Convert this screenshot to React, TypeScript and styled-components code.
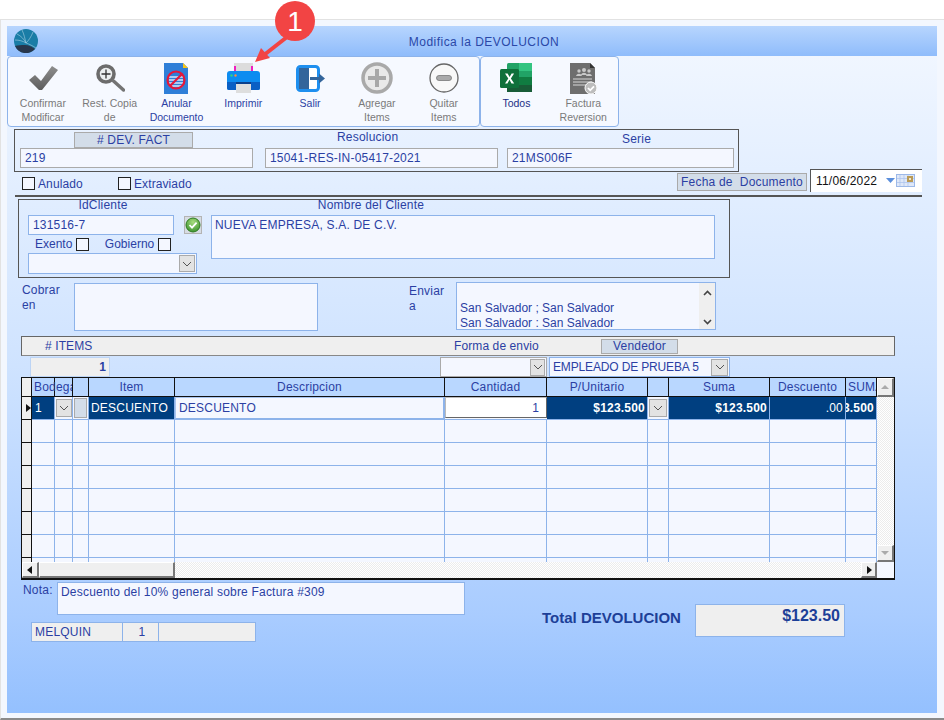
import React from 'react'
import styled, { createGlobalStyle } from 'styled-components'

const Global = createGlobalStyle`
  html, body { margin: 0; padding: 0; background: #fff; }
  body { font-family: "Liberation Sans", Arial, sans-serif; font-size: 12px; color: #2b3fa3; }
`

const Page = styled.div`
  position: relative;
  width: 944px;
  height: 720px;
  padding-top: 19px;
  box-sizing: border-box;
  overflow: hidden;
  background: #fff;
`
const Frame = styled.div`
  height: 701px;
  box-sizing: border-box;
  padding: 6px 7px 5px 6px;
  background: #f3f7fe;
  border-top: 1px solid #e2e2e2;
  border-left: 1px solid #e2e2e2;
  border-bottom: 2px solid #8a8a8a;
`
const Client = styled.div`
  height: 687px;
  display: flex;
  flex-direction: column;
  background: linear-gradient(180deg, #f0f6ff 30px, #cfe3ff 340px, #a9ccff 590px, #94c0fe 100%);
`
const TitleBar = styled.div`
  height: 30px;
  flex: none;
  display: flex;
  align-items: center;
  padding-left: 7px;
  background: linear-gradient(180deg, #b7d5fe, #8fbcfb);
`
const TitleText = styled.div`
  flex: 1;
  text-align: center;
  padding-top: 1px;
  padding-right: 7px;
  letter-spacing: 0.47px;
  color: #2a48a8;
`
const Toolbar = styled.div`
  display: flex;
  height: 71px;
  flex: none;
`
const Group = styled.div`
  display: flex;
  height: 71px;
  box-sizing: border-box;
  padding-left: ${p => p.$pad}px;
  width: ${p => p.$w}px;
  background: #f6f9ff;
  border: 1px solid #8db3ea;
  border-radius: 4px;
`
const ToolButton = styled.div`
  width: 66.8px;
  flex: none;
  display: flex;
  flex-direction: column;
  align-items: center;
`
const ToolIcon = styled.div`
  height: 40px;
  display: flex;
  align-items: center;
  justify-content: center;
  padding-top: 1px;
`
const ToolLabel = styled.div`
  font-size: 10.5px;
  line-height: 14px;
  text-align: center;
  white-space: pre;
  margin-top: -2px;
  color: ${p => (p.$off ? '#7a7a7a' : p.$strong ? '#1c2f85' : '#2b3fa3')};
`
const DocBox = styled.div`
  width: 725px;
  height: 43px;
  margin: 2px 0 0 7px;
  flex: none;
  box-sizing: border-box;
  border: 1px solid #555;
  display: grid;
  grid-template-columns: 245px 242px 227px;
  padding-left: 5px;
`
const DocCol = styled.div`
  display: flex;
  flex-direction: column;
  align-items: flex-start;
`
const Caption = styled.div`
  height: 18px;
  line-height: ${p => p.$lh}px;
  margin-left: ${p => p.$ml}px;
  letter-spacing: 0.2px;
  white-space: nowrap;
`
const Tag = styled.div`
  box-sizing: border-box;
  width: ${p => p.$w}px;
  height: ${p => p.$h || 16}px;
  line-height: ${p => (p.$h || 16) - 2}px;
  margin: ${p => p.$m || '2px 0 0 0'};
  text-align: center;
  background: #d3dde9;
  border: 1px solid #aaa;
  letter-spacing: 0.2px;
  white-space: pre;
`
const Field = styled.div`
  box-sizing: border-box;
  width: ${p => (p.$w ? `${p.$w}px` : '100%')};
  height: ${p => p.$h}px;
  padding: 2px ${p => p.$pad || 4}px;
  line-height: 15px;
  letter-spacing: 0.2px;
  flex: none;
  background: #f4f7ff;
  border: 1px solid ${p => (p.$gray ? '#aaa' : '#8db3ea')};
  white-space: nowrap;
  overflow: hidden;
`
const CheckRow = styled.div`
  height: 23px;
  flex: none;
  display: flex;
  align-items: center;
  padding-left: 15px;
`
const CheckItem = styled.label`
  display: flex;
  align-items: center;
  gap: 3px;
  width: ${p => p.$w}px;
  letter-spacing: 0.1px;
`
const Box = styled.span`
  display: block;
  width: 13px;
  height: 13px;
  flex: none;
  background: #f4f7ff;
  border: 1px solid #222;
  box-sizing: border-box;
`
const DateGroup = styled.div`
  margin-left: auto;
  display: flex;
  align-items: flex-start;
  gap: 3px;
  margin-top: -6px;
  margin-right: 15px;
`
const DateField = styled.div`
  box-sizing: border-box;
  width: 112px;
  height: 23px;
  display: flex;
  align-items: center;
  justify-content: space-between;
  padding: 0 7px 0 5px;
  background: #fff;
  color: #111;
  border-top: 1px solid #555;
  border-left: 1px solid #555;
  letter-spacing: 0.2px;
`
const Rule = styled.div`
  height: 2px;
  flex: none;
  margin: 0 15px 0 8px;
  background: #555;
`
const ClientBox = styled.div`
  width: 712px;
  height: 79px;
  flex: none;
  box-sizing: border-box;
  margin: 2px 0 0 11px;
  padding: 0 14px 0 9px;
  border: 1px solid #555;
  display: flex;
  gap: 9px;
`
const ClientLeft = styled.div`
  width: 174px;
  flex: none;
  display: flex;
  flex-direction: column;
`
const ClientRight = styled.div`
  flex: 1;
  display: flex;
  flex-direction: column;
`
const CenterCaption = styled.div`
  width: 150px;
  height: 15px;
  margin-left: ${p => p.$ml || 0}px;
  text-align: center;
  line-height: 10px;
  letter-spacing: 0.2px;
  white-space: nowrap;
`
const IdRow = styled.div`
  display: flex;
  align-items: center;
  gap: 10px;
`
const FlagRow = styled.div`
  display: flex;
  align-items: center;
  height: 18px;
  padding-left: 7px;
`
const Flag = styled.div`
  display: flex;
  align-items: center;
  gap: 3.5px;
  margin-right: ${p => p.$mr || 0}px;
`
const Select = styled.div`
  box-sizing: border-box;
  flex: none;
  width: ${p => p.$w}px;
  height: ${p => p.$h || 21}px;
  margin-left: ${p => p.$ml || 0}px;
  margin-top: ${p => p.$mt || 0}px;
  display: flex;
  align-items: center;
  justify-content: space-between;
  padding: 0 1px 0 3px;
  letter-spacing: ${p => (p.$tight ? '-0.15px' : '0.2px')};
  background: #f4f7ff;
  border: 1px solid ${p => (p.$gray ? '#aaa' : '#8db3ea')};
  white-space: nowrap;
`
const Drop = styled.span`
  width: ${p => p.$w || 16}px;
  height: ${p => p.$h || 17}px;
  flex: none;
  box-sizing: border-box;
  background: #e3e3e3;
  border: 1px solid #aaa;
  display: flex;
  align-items: center;
  justify-content: center;
`
const BillRow = styled.div`
  height: 49px;
  flex: none;
  margin-top: 4px;
  display: flex;
  padding-left: 15px;
`
const BillLabel = styled.div`
  width: ${p => p.$w}px;
  flex: none;
  margin-left: ${p => p.$ml || 0}px;
  line-height: 15px;
  padding-top: ${p => p.$top}px;
  letter-spacing: 0.2px;
`
const BillBox = styled(Field)`
  margin-top: 1px;
  padding: 0;
`
const AddressBox = styled.div`
  box-sizing: border-box;
  width: 260px;
  height: 48px;
  flex: none;
  display: flex;
  background: #f4f7ff;
  border: 1px solid #8db3ea;
`
const AddressText = styled.div`
  flex: 1;
  padding: 17.5px 0 0 3px;
  line-height: 15px;
`
const AddressScroll = styled.div`
  width: 16px;
  background: #efefef;
  display: flex;
  flex-direction: column;
  justify-content: space-between;
  align-items: center;
  padding: 7px 0 4px;
`
const ItemsBar = styled.div`
  width: 874px;
  height: 20px;
  margin: 5px 0 0 14px;
  flex: none;
  box-sizing: border-box;
  background: #efefef;
  border: 1px solid #666;
  border-bottom-color: #888;
  display: flex;
  align-items: center;
  letter-spacing: 0.1px;
`
const BarText = styled.div`
  margin-left: ${p => p.$ml}px;
  width: ${p => p.$w}px;
  flex: none;
  white-space: nowrap;
`
const FilterRow = styled.div`
  height: 21px;
  flex: none;
  display: flex;
  align-items: flex-start;
  padding-left: 23px;
`
const CountBox = styled.div`
  box-sizing: border-box;
  width: 80px;
  height: 20px;
  line-height: 18px;
  padding-right: 3px;
  margin-top: 1px;
  margin-right: 330px;
  text-align: right;
  font-weight: 700;
  background: #efefef;
  border: 1px solid #bcd4f5;
`
const Table = styled.div`
  width: 874px;
  height: 203px;
  flex: none;
  box-sizing: border-box;
  margin-left: 14px;
  border: 1px solid #111;
  border-bottom-width: 2px;
  display: grid;
  grid-template-columns: 1fr 17px;
  grid-template-rows: 184px 16px;
  background: #f4f7ff;
`
const TableBody = styled.div`
  overflow: hidden;
`
const columns = '10px 23px 18px 16px 86px 270px 102px 101px 21px 101px 76px 31px'
const HeadRow = styled.div`
  display: grid;
  grid-template-columns: ${columns};
  height: 18px;
  background: #b9d7ff;
  border-bottom: 1px solid #111;
`
const HeadCell = styled.div`
  box-sizing: border-box;
  line-height: 18px;
  padding-left: ${p => (p.$left ? 2 : 0)}px;
  text-align: ${p => (p.$left ? 'left' : 'center')};
  letter-spacing: 0.2px;
  white-space: nowrap;
  overflow: ${p => (p.$spill ? 'visible' : 'hidden')};
  border-right: 1px solid #111;
  background: ${p => (p.$corner ? '#efefef' : p.$clear ? 'transparent' : '#b9d7ff')};
`
const BodyRow = styled.div`
  display: grid;
  grid-template-columns: ${columns};
  height: 23px;
  box-sizing: border-box;
  border-bottom: 1px solid #8db3ea;
`
const Cell = styled.div`
  box-sizing: border-box;
  display: flex;
  align-items: center;
  justify-content: ${p => (p.$right ? 'flex-end' : 'flex-start')};
  padding: 0 ${p => (p.$right ? 2 : 0)}px 0 ${p => (p.$right ? 0 : p.$pl || 2)}px;
  overflow: hidden;
  white-space: nowrap;
  letter-spacing: 0.2px;
  border-right: 1px solid #8db3ea;
  font-weight: ${p => (p.$bold ? 700 : 400)};
  color: ${p => (p.$sel ? '#fff' : 'inherit')};
  background: ${p => (p.$sel ? '#003f80' : 'transparent')};
`
const RowHead = styled.div`
  box-sizing: border-box;
  background: #efefef;
  border-right: 1px solid #111;
  border-bottom: 1px solid #111;
  margin-bottom: -1px;
  display: flex;
  align-items: center;
  justify-content: flex-end;
`
const NameCell = styled.div`
  box-sizing: border-box;
  display: flex;
  align-items: center;
  padding-left: 3px;
  letter-spacing: 0.2px;
  background: #f4f7ff;
  border-left: 1px solid #a9c5ef;
  border-top: 1px solid #a9c5ef;
  border-right: 2px solid #8db3ea;
  border-bottom: 1px solid #8db3ea;
`
const QtyCell = styled.div`
  box-sizing: border-box;
  display: flex;
  align-items: center;
  justify-content: flex-end;
  padding-right: 7px;
  margin-bottom: 1px;
  background: #fff;
  border: 1px solid #bbb;
  border-right-color: #666;
  border-bottom-color: #666;
`
const MiniCell = styled.div`
  box-sizing: border-box;
  display: flex;
  align-items: center;
  justify-content: center;
  padding: 1px;
  background: #f4f7ff;
  border-right: 1px solid #8db3ea;
`
const BlankKey = styled.div`
  width: 13px;
  height: 20px;
  box-sizing: border-box;
  background: #d3dde9;
  border: 1px solid #aaa;
`
const Track = styled.div`
  display: flex;
  flex-direction: ${p => (p.$v ? 'column' : 'row')};
  justify-content: space-between;
  background: repeating-conic-gradient(#ececec 0 25%, #fff 0 50%) 0 0 / 2px 2px;
`
const ScrollKey = styled.div`
  box-sizing: border-box;
  width: ${p => p.$w || 17}px;
  height: ${p => p.$h || 16}px;
  flex: none;
  display: flex;
  align-items: center;
  justify-content: center;
  background: #efefef;
  border-top: 1px solid #fff;
  border-left: 1px solid #fff;
  border-right: 2px solid #777;
  border-bottom: 2px solid #777;
`
const Thumb = styled(ScrollKey)`
  margin-right: auto;
`
const ScrollCorner = styled.div`
  background: #f4f7ff;
`
const Bottom = styled.div`
  display: grid;
  grid-template-columns: 34px 408px 77px 153px 150px;
  grid-template-rows: 33px;
  padding-left: 16px;
  margin-top: 2px;
  flex: none;
`
const NoteLabel = styled.div`
  padding-top: 1px;
  letter-spacing: 0.2px;
`
const TotalLabel = styled.div`
  grid-column: 4;
  margin-top: 28px;
  height: 16px;
  line-height: 16px;
  font-size: 15px;
  font-weight: 700;
  white-space: nowrap;
  color: #1d3f98;
`
const TotalBox = styled.div`
  box-sizing: border-box;
  height: 33px;
  margin-top: 22px;
  padding: 2px 4px 0 0;
  text-align: right;
  font-size: 16px;
  line-height: 18px;
  font-weight: 700;
  background: #efefef;
  border: 1px solid #8db3ea;
  color: #1d3f98;
`
const StatusRow = styled.div`
  display: flex;
  margin: 7px 0 0 24px;
  flex: none;
`
const StatusCell = styled.div`
  box-sizing: border-box;
  width: ${p => p.$w}px;
  height: 20px;
  line-height: 18px;
  padding-left: 3px;
  text-align: ${p => (p.$center ? 'center' : 'left')};
  background: #efefef;
  border: 1px solid #8db3ea;
  margin-right: -1px;
  letter-spacing: 0.2px;
`
const Callout = styled.svg`
  position: absolute;
  left: 240px;
  top: 0;
`
const CalloutNumber = styled.text`
  font-family: "Liberation Sans", Arial, sans-serif;
  font-size: 28px;
  fill: #fff;
`

const Chevron = () => (
  <svg width="10" height="6" viewBox="0 0 10 6"><path d="M1 1l4 4 4-4" fill="none" stroke="#555" strokeWidth="1" /></svg>
)
const Tri = ({ d, c = '#111' }: { d: string; c?: string }) => (
  <svg width="8" height="8" viewBox="0 0 8 8"><path d={d} fill={c} /></svg>
)

const Logo = () => (
  <svg width="24" height="24" viewBox="0 0 24 24">
    <circle cx="12" cy="12" r="12" fill="#1a7da6" />
    <path d="M1 17a12 12 0 0 0 20 3c-3-2-6-4-10-4-4 0-7 0-10 1z" fill="#28374c" />
    <path d="M3 5c4 2 7 5 9 9 3-3 5-6 7-11M1 11c4 0 8 1 11 3M12 14c-1-4-2-9-4-13M12 14c3 1 7 3 10 5" fill="none" stroke="#a9d2e4" strokeWidth=".6" />
  </svg>
)
const CheckIcon = () => (
  <svg width="30" height="26" viewBox="0 0 30 26">
    <defs><linearGradient id="ck" x1="0" y1="0" x2="0" y2="1"><stop offset="0" stopColor="#8e8e8e" /><stop offset="1" stopColor="#5d5d5d" /></linearGradient></defs>
    <path d="M1 15l6-5 6 6L24 1l6 4-16 20h-3z" fill="url(#ck)" />
  </svg>
)
const LensIcon = () => (
  <svg width="30" height="30" viewBox="0 0 30 30">
    <circle cx="11" cy="11" r="8" fill="#eceff0" stroke="#6c6c6c" strokeWidth="3.6" />
    <path d="M11 6.500v9M6.500 11h9" stroke="#333" strokeWidth="1.300" />
    <path d="M18.500 18l10 9" stroke="#747474" strokeWidth="3.400" strokeLinecap="round" />
  </svg>
)
const VoidIcon = () => (
  <svg width="24" height="31" viewBox="0 0 24 31">
    <path d="M0 0h19l5 5v26H0z" fill="#2f7fd8" />
    <path d="M19 0l5 5h-5z" fill="#f5c518" />
    <path d="M5 14h14M5 17h14M5 20h14M5 23h14" stroke="#d8e8fa" strokeWidth="1.600" />
    <circle cx="12" cy="17" r="8.500" fill="none" stroke="#e5173a" strokeWidth="2.200" />
    <path d="M6 23l12-12" stroke="#e5173a" strokeWidth="2.200" />
  </svg>
)
const PrinterIcon = () => (
  <svg width="33" height="30" viewBox="0 0 33 30">
    <rect x="7" y="0" width="19" height="9" fill="#dcdcdc" />
    <rect x="7" y="3" width="2" height="6" fill="#f01fc0" />
    <rect x="24" y="3" width="2" height="6" fill="#f01fc0" />
    <path d="M3 8h27a3 3 0 0 1 3 3v14a2 2 0 0 1-2 2H2a2 2 0 0 1-2-2V11a3 3 0 0 1 3-3z" fill="#0d8cf0" />
    <path d="M0 19h33v6a2 2 0 0 1-2 2H2a2 2 0 0 1-2-2z" fill="#0a5fc4" />
    <rect x="9" y="21" width="15" height="9" fill="#dedede" />
    <rect x="9" y="19" width="15" height="2" fill="#0b3f8a" />
    <circle cx="4.500" cy="12.500" r="1.200" fill="#35d07f" />
    <circle cx="8.500" cy="12.500" r="1.200" fill="#ff8a3c" />
  </svg>
)
const ExitIcon = () => (
  <svg width="29" height="27" viewBox="0 0 29 27">
    <rect x="1.500" y="1.500" width="21" height="24" rx="3" fill="#fff" stroke="#1e8fef" strokeWidth="3" />
    <path d="M3 3h10v21H3z" fill="#33659b" />
    <path d="M14 13.500h11" stroke="#33659b" strokeWidth="3" />
    <path d="M23 8.500l6 5-6 5z" fill="#33659b" />
  </svg>
)
const PlusIcon = () => (
  <svg width="32" height="32" viewBox="0 0 32 32">
    <circle cx="16" cy="16" r="14" fill="#e9e9e9" stroke="#a9a9a9" strokeWidth="3.500" />
    <path d="M16 7v18M7 16h18" stroke="#a8a8a8" strokeWidth="4" />
  </svg>
)
const MinusIcon = () => (
  <svg width="30" height="30" viewBox="0 0 30 30">
    <circle cx="15" cy="15" r="14" fill="#f8f8f8" stroke="#666" strokeWidth="1.300" />
    <rect x="7.500" y="12.500" width="15" height="5" rx="2.500" fill="#aaa" stroke="#777" strokeWidth=".8" />
  </svg>
)
const ExcelIcon = () => (
  <svg width="32" height="30" viewBox="0 0 32 30">
    <rect x="7" y="0" width="25" height="29" rx="1.500" fill="#21a366" />
    <rect x="19" y="0" width="13" height="8" fill="#33c481" />
    <rect x="7" y="7" width="12" height="15" fill="#107c41" />
    <rect x="19" y="14" width="13" height="8" fill="#107c41" />
    <rect x="19" y="22" width="13" height="7" fill="#185c37" />
    <rect x="7" y="22" width="12" height="7" fill="#185c37" />
    <rect x="0" y="6" width="19" height="19" rx="1.500" fill="#0f703b" />
    <path d="M5 10.500h2.600l2 3.600 2-3.600h2.500l-3.200 5 3.300 5h-2.700l-2-3.700-2.100 3.700H5l3.300-5z" fill="#fff" />
  </svg>
)
const ReversalIcon = () => (
  <svg width="27" height="31" viewBox="0 0 27 31">
    <path d="M0 0h20l5 5v26H0z" fill="#6e6e6e" />
    <path d="M20 0l5 5h-5z" fill="#333" />
    <circle cx="9" cy="8" r="1.700" fill="#c9c9c9" />
    <circle cx="14" cy="7" r="2" fill="#c9c9c9" />
    <circle cx="19" cy="8" r="1.700" fill="#c9c9c9" />
    <path d="M6 13c1-3 5-3 6 0zM11 12c1-3 5-3 6 0zM16 13c1-3 5-3 6 0z" fill="#c9c9c9" />
    <path d="M3 16h19M3 19h19M3 22h14" stroke="#d6d6d6" strokeWidth="1.200" />
    <circle cx="21" cy="25" r="6" fill="#bdbdbd" stroke="#fff" />
    <path d="M18 25l2.200 2.300 3.800-4" fill="none" stroke="#fff" strokeWidth="1.800" />
  </svg>
)
const GreenKey = () => (
  <svg width="18" height="18" viewBox="0 0 18 18">
    <defs>
      <radialGradient id="gk" cx=".5" cy=".3" r=".8"><stop offset="0" stopColor="#a7dc7e" /><stop offset="1" stopColor="#2f8a25" /></radialGradient>
    </defs>
    <rect x=".5" y=".5" width="17" height="17" fill="#d6dce4" stroke="#b4b4b4" />
    <circle cx="9" cy="9" r="7" fill="url(#gk)" stroke="#2f7b20" />
    <path d="M5.500 9l2.500 2.600 4.600-5" fill="none" stroke="#fff" strokeWidth="1.800" />
  </svg>
)
const CalendarIcon = () => (
  <svg width="29" height="14" viewBox="0 0 29 14">
    <path d="M0 4h9L4.500 9z" fill="#5b8fdc" />
    <rect x="10.500" y=".5" width="18" height="12" fill="#dfe8f8" stroke="#9db9e8" />
    <path d="M14 1v11M18 1v11M22 1v11M11 4.500h17M11 8.500h17" stroke="#a9c2ec" strokeWidth=".7" />
    <rect x="21" y="2" width="6" height="6" fill="#b99a55" />
    <rect x="23" y="4" width="2" height="2" fill="#efe6cf" />
  </svg>
)

const tools = [
  { icon: <CheckIcon />, label: 'Confirmar\nModificar', off: true },
  { icon: <LensIcon />, label: 'Rest. Copia\nde', off: true },
  { icon: <VoidIcon />, label: 'Anular\nDocumento' },
  { icon: <PrinterIcon />, label: 'Imprimir' },
  { icon: <ExitIcon />, label: 'Salir' },
  { icon: <PlusIcon />, label: 'Agregar\nItems', off: true },
  { icon: <MinusIcon />, label: 'Quitar\nItems', off: true },
]

const emptyRows = [0, 1, 2, 3, 4, 5, 6]

const EmptyRow = () => (
  <BodyRow>
    <RowHead />
    {Array.from({ length: 11 }).map((_, i) => <Cell key={i} />)}
  </BodyRow>
)

const App = () => {
  return (
    <Page>
      <Global />
      <Frame>
        <Client>
          <TitleBar>
            <Logo />
            <TitleText>Modifica la DEVOLUCION</TitleText>
          </TitleBar>
          <Toolbar>
            <Group $w={473} $pad={1.5}>
              {tools.map(t => (
                <ToolButton key={t.label}>
                  <ToolIcon>{t.icon}</ToolIcon>
                  <ToolLabel $off={t.off}>{t.label}</ToolLabel>
                </ToolButton>
              ))}
            </Group>
            <Group $w={139} $pad={2}>
              <ToolButton>
                <ToolIcon><ExcelIcon /></ToolIcon>
                <ToolLabel $strong>Todos</ToolLabel>
              </ToolButton>
              <ToolButton>
                <ToolIcon><ReversalIcon /></ToolIcon>
                <ToolLabel $off>{'Factura\nReversion'}</ToolLabel>
              </ToolButton>
            </Group>
          </Toolbar>

          <DocBox>
            <DocCol>
              <Tag $w={119} $m="2px 0 0 54px"># DEV. FACT</Tag>
              <Field $w={233} $h={20} $gray>219</Field>
            </DocCol>
            <DocCol>
              <Caption $lh={14} $ml={72}>Resolucion</Caption>
              <Field $w={233} $h={20} $gray>15041-RES-IN-05417-2021</Field>
            </DocCol>
            <DocCol>
              <Caption $lh={18} $ml={115}>Serie</Caption>
              <Field $h={20} $gray>21MS006F</Field>
            </DocCol>
          </DocBox>

          <CheckRow>
            <CheckItem $w={96}><Box />Anulado</CheckItem>
            <CheckItem $w={96}><Box />Extraviado</CheckItem>
            <DateGroup>
              <Tag $w={130} $h={18} $m="4px 0 0 0">{'Fecha de  Documento'}</Tag>
              <DateField>11/06/2022<CalendarIcon /></DateField>
            </DateGroup>
          </CheckRow>
          <Rule />

          <ClientBox>
            <ClientLeft>
              <CenterCaption>IdCliente</CenterCaption>
              <IdRow>
                <Field $w={146} $h={20}>131516-7</Field>
                <GreenKey />
              </IdRow>
              <FlagRow>
                <Flag $mr={16}>Exento<Box /></Flag>
                <Flag>Gobierno<Box /></Flag>
              </FlagRow>
              <Select $w={169} $h={21}>
                <span />
                <Drop><Chevron /></Drop>
              </Select>
            </ClientLeft>
            <ClientRight>
              <CenterCaption $ml={85}>Nombre del Cliente</CenterCaption>
              <Field $h={44} $pad={3}>NUEVA EMPRESA, S.A. DE C.V.</Field>
            </ClientRight>
          </ClientBox>

          <BillRow>
            <BillLabel $w={52} $top={1}>Cobrar<br />en</BillLabel>
            <BillBox $w={244} $h={48} />
            <BillLabel $w={47} $top={2} $ml={91}>Enviar<br />a</BillLabel>
            <AddressBox>
              <AddressText>San Salvador ; San Salvador<br />San Salvador : San Salvador</AddressText>
              <AddressScroll>
                <svg width="9" height="6" viewBox="0 0 9 6"><path d="M1 5l3.500-3.500L8 5" fill="none" stroke="#444" strokeWidth="1.600" /></svg>
                <svg width="9" height="6" viewBox="0 0 9 6"><path d="M1 1l3.500 3.500L8 1" fill="none" stroke="#444" strokeWidth="1.600" /></svg>
              </AddressScroll>
            </AddressBox>
          </BillRow>

          <ItemsBar>
            <BarText $ml={23} $w={385}># ITEMS</BarText>
            <BarText $ml={24} $w={147}>Forma de envio</BarText>
            <Tag $w={77} $h={15} $m="0">Vendedor</Tag>
          </ItemsBar>
          <FilterRow>
            <CountBox>1</CountBox>
            <Select $w={107} $h={20} $mt={1} $gray>
              <span />
              <Drop $h={17} $w={15}><Chevron /></Drop>
            </Select>
            <Select $w={181} $h={20} $mt={1} $ml={2} $tight>
              EMPLEADO DE PRUEBA 5
              <Drop $h={17} $w={17}><Chevron /></Drop>
            </Select>
          </FilterRow>

          <Table>
            <TableBody>
              <HeadRow>
                <HeadCell $corner />
                <HeadCell $left $spill $clear>Bodega</HeadCell>
                <HeadCell $clear />
                <HeadCell />
                <HeadCell>Item</HeadCell>
                <HeadCell>Descripcion</HeadCell>
                <HeadCell>Cantidad</HeadCell>
                <HeadCell>P/Unitario</HeadCell>
                <HeadCell />
                <HeadCell>Suma</HeadCell>
                <HeadCell>Descuento</HeadCell>
                <HeadCell $left>SUMA</HeadCell>
              </HeadRow>
              <BodyRow>
                <RowHead><Tri d="M3 0l5 4-5 4z" /></RowHead>
                <Cell $sel $pl={3}>1</Cell>
                <MiniCell><Drop $w={16} $h={18}><Chevron /></Drop></MiniCell>
                <MiniCell><BlankKey /></MiniCell>
                <Cell $sel>DESCUENTO</Cell>
                <NameCell>DESCUENTO</NameCell>
                <QtyCell>1</QtyCell>
                <Cell $sel $right $bold>$123.500</Cell>
                <MiniCell><Drop $w={18} $h={18}><Chevron /></Drop></MiniCell>
                <Cell $sel $right $bold>$123.500</Cell>
                <Cell $sel $right>.00</Cell>
                <Cell $sel $right $bold>$123.500</Cell>
              </BodyRow>
              {emptyRows.map(i => <EmptyRow key={i} />)}
            </TableBody>
            <Track $v>
              <ScrollKey $h={19}><Tri d="M4 2l4 4H0z" c="#aaa" /></ScrollKey>
              <ScrollKey $h={17}><Tri d="M0 2h8L4 6z" c="#aaa" /></ScrollKey>
            </Track>
            <Track>
              <ScrollKey><Tri d="M6 0v8L1 4z" /></ScrollKey>
              <Thumb $w={136} />
              <ScrollKey $w={16}><Tri d="M2 0l5 4-5 4z" /></ScrollKey>
            </Track>
            <ScrollCorner />
          </Table>

          <Bottom>
            <NoteLabel>Nota:</NoteLabel>
            <Field $h={33} $pad={3}>Descuento del 10% general sobre Factura #309</Field>
            <TotalLabel>Total DEVOLUCION</TotalLabel>
            <TotalBox>$123.50</TotalBox>
          </Bottom>
          <StatusRow>
            <StatusCell $w={92}>MELQUIN</StatusCell>
            <StatusCell $w={37} $center>1</StatusCell>
            <StatusCell $w={98} />
          </StatusRow>
        </Client>
      </Frame>
      <Callout width="90" height="80" viewBox="0 0 90 80">
        <path d="M47 37L24 55" stroke="#f24444" strokeWidth="4" />
        <path d="M15 62l6-14 9 10z" fill="#f24444" />
        <circle cx="55" cy="21" r="20" fill="#f24444" />
        <CalloutNumber x="55" y="31" textAnchor="middle">1</CalloutNumber>
      </Callout>
    </Page>
  )
}

export default App
